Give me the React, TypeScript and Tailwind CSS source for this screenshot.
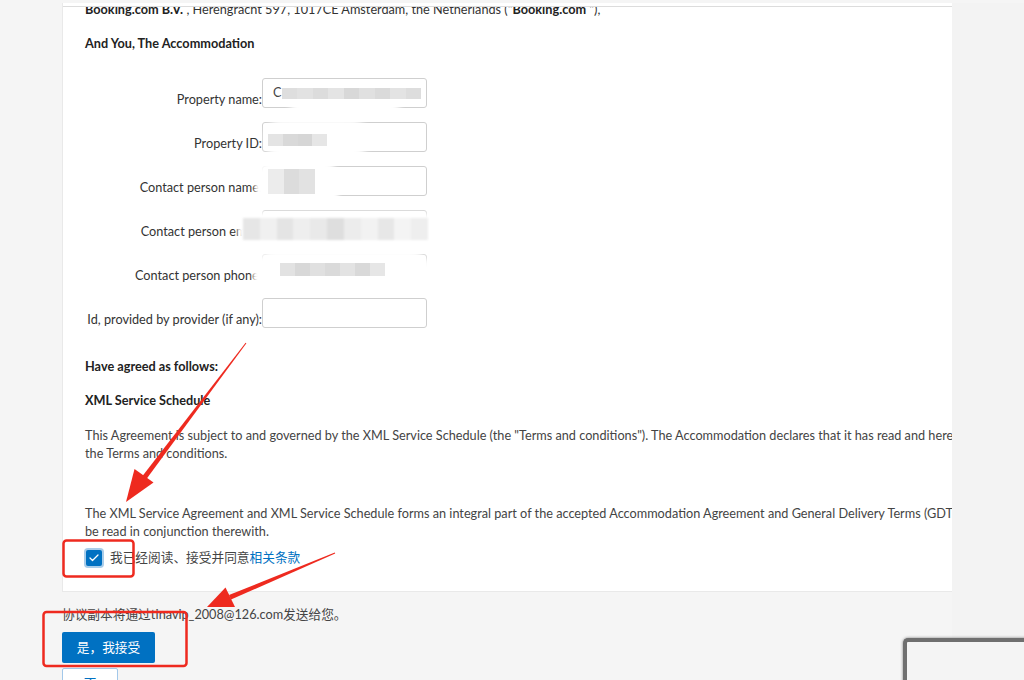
import { Check } from "lucide-react";

const font = "font-['Lato','Noto_Sans_CJK_SC',sans-serif]";

function Field({ label, value, children }: { label: string; value?: string; children?: React.ReactNode }) {
  return (
    <div className="relative flex items-end h-[30px]">
      <div className="w-[177px] shrink-0 flex justify-end">
        <span className="whitespace-nowrap leading-[17px] text-[#333]">{label}</span>
      </div>
      <div className="w-[165px] h-[30px] shrink-0 border border-[#cfcfcf] rounded-[3px] bg-white pl-[10px] flex items-center text-[#444]">
        {value}
      </div>
      {children}
    </div>
  );
}

// pixelated gray strip used to hide personal data
function Pixels({ shades }: { shades: string[] }) {
  return (
    <div className="flex h-full w-full">
      {shades.map((c, i) => (
        <div key={i} className="flex-1 h-full" style={{ backgroundColor: c }} />
      ))}
    </div>
  );
}

export default function App() {
  return (
    <div className={`relative h-[680px] w-[1024px] overflow-hidden bg-[#f5f5f5] text-[12.7px] ${font}`}>
      <div className="flex h-full pt-[3px]">
        <div className="w-[952px] shrink-0 pl-[62px]">
          {/* agreement card */}
          <div className="bg-white border-l border-b border-[#e9e9e9] overflow-hidden">
            <div className="h-[4px] border-b border-[#dcdcdc]" />
            <div className="overflow-hidden pl-[22px] pb-[25px]">
              <p className="mt-[-6px] leading-[17px] whitespace-nowrap text-[#333]">
                <b className="text-[#222]">Booking.com B.V.</b> , Herengracht 597, 1017CE Amsterdam, the Netherlands ("
                <b className="text-[#222]">Booking.com</b> "),
              </p>
              <h3 className="mt-[17px] leading-[17px] font-bold text-[#222]">And You, The Accommodation</h3>

              <div className="mt-[26px] flex flex-col gap-[14px]">
                <Field label="Property name:" value="C">
                  <div className="absolute left-[205px] top-[22px] w-[110px] h-[20px] rounded-full bg-white blur-[3px]" />
                  <div className="absolute left-[197px] top-[10px] w-[139px] h-[11px] blur-[0.6px]">
                    <Pixels shades={["#dedede", "#e2e2e2", "#dcdcdc", "#e4e4e4", "#d8d8d8", "#e0e0e0", "#dadada", "#e3e3e3", "#dddddd"]} />
                  </div>
                </Field>
                <Field label="Property ID:">
                  <div className="absolute left-[180px] top-[-3px] w-[103px] h-[40px] rounded-[18px] bg-white blur-[3px]" />
                  <div className="absolute left-[183px] top-[12px] w-[59px] h-[12px] blur-[0.6px]">
                    <Pixels shades={["#e4e4e4", "#d9d9d9", "#d6d6d6", "#e6e6e6"]} />
                  </div>
                </Field>
                <Field label="Contact person name:">
                  <div className="absolute left-[170px] top-[-5px] w-[85px] h-[47px] rounded-[20px] bg-white blur-[2px]" />
                  <div className="absolute left-[183px] top-[3px] w-[47px] h-[25px] blur-[0.6px]">
                    <Pixels shades={["#ececec", "#dcdcdc", "#e2e2e2"]} />
                  </div>
                </Field>
                <Field label="Contact person email:">
                  <div className="absolute left-[153px] top-[2px] w-[194px] h-[31px] rounded-[10px] bg-white blur-[2px]" />
                  <div className="absolute left-[158px] top-[8px] w-[185px] h-[22px] blur-[0.8px]">
                    <Pixels shades={["#e6e6e6", "#f0f0f0", "#e4e4e4", "#eeeeee", "#e9e9e9", "#dedede", "#ececec", "#f2f2f2", "#e7e7e7", "#f4f4f4", "#eeeeee"]} />
                  </div>
                </Field>
                <Field label="Contact person phone:">
                  <div className="absolute left-[168px] top-[-3px] w-[179px] h-[48px] rounded-[22px] bg-white blur-[2px]" />
                  <div className="absolute left-[195px] top-[9px] w-[105px] h-[13px] blur-[0.6px]">
                    <Pixels shades={["#e2e2e2", "#d8d8d8", "#e0e0e0", "#dadada", "#e3e3e3", "#d9d9d9", "#e6e6e6"]} />
                  </div>
                </Field>
                <Field label="Id, provided by provider (if any):" />
              </div>

              <h3 className="mt-[30px] leading-[17px] font-bold text-[#222]">Have agreed as follows:</h3>
              <h3 className="mt-[17px] leading-[17px] font-bold text-[#222]">XML Service Schedule</h3>

              <p className="mt-[18px] leading-[17.5px] whitespace-nowrap text-[#444]">
                This Agreement is subject to and governed by the XML Service Schedule (the "Terms and conditions"). The Accommodation declares that it has read and hereby accepts
                <br />
                the Terms and conditions.
              </p>
              <p className="mt-[43px] leading-[17.5px] whitespace-nowrap text-[#444]">
                The XML Service Agreement and XML Service Schedule forms an integral part of the accepted Accommodation Agreement and General Delivery Terms (GDT") and shall
                <br />
                be read in conjunction therewith.
              </p>

              <label className="mt-[9px] flex items-center h-[17px] gap-[8px]">
                <span className="ml-[1px] w-[16px] h-[16px] rounded-[2px] bg-[#0071c2] ring-2 ring-[#a9cdea] flex items-center justify-center">
                  <Check className="w-[12px] h-[12px] text-white" strokeWidth={2.5} />
                </span>
                <span className="leading-[17px] text-[#444]">
                  我已经阅读、接受并同意<span className="text-[#0071c2]">相关条款</span>
                </span>
              </label>
            </div>
          </div>

          <p className="mt-[14px] leading-[17px] text-[#444]">协议副本将通过tinavip_2008@126.com发送给您。</p>
          <button className="mt-[9px] block w-[93px] h-[31px] rounded-[2px] bg-[#0071c2] text-white">是，我接受</button>
          <button className="mt-[5px] block w-[56px] h-[32px] rounded-[2px] border border-[#a3c8ea] bg-white text-[#0071c2]">否</button>
        </div>
        <div className="flex-1 bg-[#f3f3f3]" />
      </div>

      {/* another window peeking in at the bottom right */}
      <div className="absolute left-[903px] top-[638px] w-[140px] h-[60px] rounded-tl-[5px] border-t-[4px] border-l-[4px] border-[#6f6f6f] bg-[#f4f4f4] shadow-[0_0_3px_rgba(0,0,0,0.5)]" />

      {/* red annotations */}
      <svg className="absolute inset-0 pointer-events-none" width="1024" height="680" viewBox="0 0 1024 680">
        <rect x="63.5" y="540.5" width="70" height="36" rx="3" fill="none" stroke="#ee2a1f" strokeWidth="2.5" />
        <rect x="43.5" y="612" width="143" height="54" rx="3" fill="none" stroke="#ee2a1f" strokeWidth="2.5" />
        <polygon points="246.4,343.3 245.6,342.7 142.1,476.5 146.1,479.5" fill="#ee2a1f" />
        <polygon points="126,502 134.5,469 153.5,482.5" fill="#ee2a1f" />
        <polygon points="335.2,553.5 334.8,552.5 229,595 231,599.6" fill="#ee2a1f" />
        <polygon points="207,607 225.5,587.5 235,607" fill="#ee2a1f" />
      </svg>
    </div>
  );
}
